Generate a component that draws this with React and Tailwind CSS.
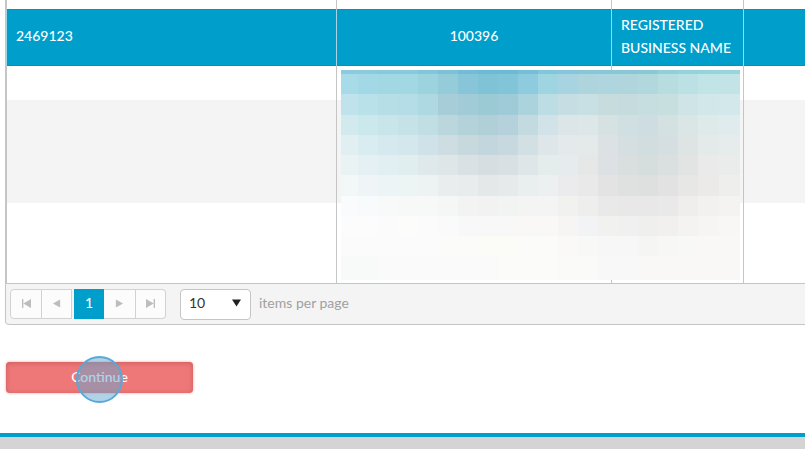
import clsx from "clsx";

// Redacted block: one colour per cell, rows from top to bottom
const MOSAIC_X = [0, 17, 37, 57, 77, 97, 117, 137, 157, 177, 197, 217, 237, 257, 277, 297, 317, 337, 357, 378, 399];
const MOSAIC_Y = [0, 4, 24, 45, 65, 85, 105, 126, 146, 166, 186, 210];
const MOSAIC = [
  "8bcbdd 8bcbdd 88cadb 88cadb 82c6d9 7bc2d6 72bdd5 6abbd5 6abbd5 75bfd6 80c8d9 86c6da 88c7d6 88c7d6 88c7d6 88c9d6 8fd0da 94d3dc 96d4dd 98d6df",
  "a6dbe7 a3d9e6 a1d8e4 a1d8e4 9dd3df 94ccda 89c5d8 80c3d6 82c4d8 8fcbde 9fd5e0 a8d3e0 aed4dd afd5de b0d5dd b1d8dc b8dde1 bce1e5 c1e4e7 c2e4e7",
  "bfe2ec b9e1e9 b5dee7 b4dde7 aed8e2 a7ced8 a0cbd7 9bcad5 9ecbd7 abd3dd bbdde3 c6dee3 c8e0e3 c6dcdd c5dbde c7dee1 c8dfe0 cfe4e6 d2e7e9 d3e8ea",
  "d2e9ee cbe8ed c8e5ea c4e2e8 c1dee5 bbd6dc b3d2da b0cfd7 b5d1dc c3dbe0 d1e3e8 dce6e8 dee7e7 d5e2e1 d0dfe2 cedde1 d3e1e1 dae6e6 deeaea dfebec",
  "e1eff3 d9ecef d5e9ee d3e7ec d0e2e9 cedde2 c7d9dc c3d5dd c7d8df d2e0e3 dee6e9 e4e9ec e4eae9 dce1e3 d5dee0 d2dde0 d5dee1 dee4e4 e4e9e9 e6ecec",
  "e9f3f4 e5f0f4 e2eff2 e1eeef dfe8eb dee6e7 dae1e4 d6dee1 d9e0e4 dfe6e8 e5ecec e6ebed e6e8e7 dde1e4 d9dfdf d6dddd dadfe0 e2e4e3 eaeaea eaecec",
  "f2f7f8 eff5f7 edf4f6 ecf4f4 edf2f3 e9edee e8ecec e5e8e9 e6eaeb e9eeee edf0f0 ebebed e9e9e9 e3e3e4 dfe1e1 dedfdf e2e2e3 e7e7e6 eceae9 eeeeec",
  "f9fbfd f8fbfb f7faf9 f7f9f8 f6f9f8 f4f7f6 f3f3f3 f2f2f2 f2f4f4 f4f4f4 f4f4f4 f1f1ef eeeeec e9e9ea e8e8e8 e8e8e8 e9e9ea efeeed f2f1ef f4f3f2",
  "fcfcfc fcfcfc fbfbfb fcfcfa fbfbfc fafafb f8f8f9 f8f8f8 f8f8f8 f9f8f7 f9f8f6 f6f5f4 f2f3f4 f1f1ef f0f0f0 efefee f1f0ee f4f3f2 f6f5f4 f8f7f5",
  "fbfbfb fbfbfb fbfbfb fbfbfb fbfbfb fbfbf9 fbfbf9 fbfbf8 fbfbf8 fbfbf9 fbfbf9 faf9f7 f8f8f6 f7f7f8 f7f7f7 f5f6f4 f7f8f6 f8f9f7 f9f8f7 f9f8f7",
  "f8f9f9 f8f9f9 fafafa fafafa fafafa fafafa fafafa fafafa fbfbf9 fbfbf9 fbfbf9 fafbf8 fafaf8 f8f8f9 f8f8f9 faf8f7 f9f8f7 f9f8f7 f9f8f7 f9f8f7",
].map((row) => row.split(" "));

function Redaction({ className }) {
  return (
    <svg width="399" height="210" shapeRendering="crispEdges" aria-hidden="true" className={className}>
      {MOSAIC.map((row, y) =>
        row.map((fill, x) => (
          <rect
            key={`${x}-${y}`}
            x={MOSAIC_X[x]}
            y={MOSAIC_Y[y]}
            width={MOSAIC_X[x + 1] - MOSAIC_X[x]}
            height={MOSAIC_Y[y + 1] - MOSAIC_Y[y]}
            fill={`#${fill}`}
          />
        ))
      )}
    </svg>
  );
}

const ROWS = [
  { cells: ["", "", "", ""], className: "h-[9px]" },
  {
    cells: ["2469123", "100396", "REGISTERED BUSINESS NAME", ""],
    className: "h-[57px] bg-[#009ecb] text-white shadow-[inset_0_1px_0_#0b8fb8,inset_0_-1px_0_#0b8fb8]",
    selected: true,
  },
  { cells: ["", "", "", ""], className: "h-[34px]" },
  { cells: ["", "", "", ""], className: "h-[103px] bg-[#f4f4f4]" },
  { cells: ["", "", "", ""], className: "h-20" },
];

function Grid() {
  return (
    <div className="relative">
      <table className="w-full table-fixed border-separate border-spacing-0">
        <colgroup>
          <col className="w-[330px]" />
          <col className="w-[275px]" />
          <col className="w-[132px]" />
          <col />
        </colgroup>
        <tbody>
          {ROWS.map((row, r) => (
            <tr key={r} className={row.className}>
              {row.cells.map((cell, c) => (
                <td
                  key={c}
                  className={clsx(
                    "border-l pt-0 pb-1 font-medium leading-[23px]",
                    row.selected ? "border-[#a5d5e3]" : "border-[#c5c5c5]",
                    c === 1 ? "px-2 text-center" : "pl-[9px]"
                  )}
                >
                  {cell}
                </td>
              ))}
            </tr>
          ))}
        </tbody>
      </table>
      <Redaction className="absolute left-[335px] top-[70px]" />
    </div>
  );
}

function PagerButton({ label, className, children }) {
  return (
    <button
      type="button"
      aria-label={label}
      className={clsx("flex h-[30px] items-center justify-center border-[#d2d2d2] bg-[#fcfcfc] pb-px text-[#bdbdbd]", className)}
    >
      <svg width="9" height="9" viewBox="0 0 10 10" fill="currentColor" aria-hidden="true">
        {children}
      </svg>
    </button>
  );
}

function Pager() {
  return (
    <div className="flex h-[42px] items-center rounded-bl border-y border-[#c5c5c5] bg-[#f4f4f4] pl-1">
      <PagerButton label="First page" className="w-8 rounded-l border">
        <path d="M0 0h1.500v10H0zM10 0v10L1.500 5z" />
      </PagerButton>
      <PagerButton label="Previous page" className="w-[30px] border-y border-r">
        <path d="M9 0.500v9L1 5z" />
      </PagerButton>
      <button
        type="button"
        aria-current="page"
        className="ml-0.5 h-[30px] w-[30px] bg-[#009ecb] pb-0.5 font-medium text-white"
      >
        1
      </button>
      <PagerButton label="Next page" className="w-8 border-y border-r">
        <path d="M1 0.500v9l8-4.500z" />
      </PagerButton>
      <PagerButton label="Last page" className="w-[30px] rounded-r border-y border-r">
        <path d="M0 0v10l8.500-5zM8.500 0h1.500v10H8.500z" />
      </PagerButton>

      <div className="relative ml-[14px]">
        <select
          id="page-size"
          defaultValue="10"
          className="block h-[31px] w-[71px] appearance-none rounded border border-[#c5c5c5] bg-white pb-0.5 pl-2 text-[#333]"
        >
          <option>5</option>
          <option>10</option>
          <option>20</option>
        </select>
        <svg
          width="9"
          height="8"
          viewBox="0 0 9 8"
          aria-hidden="true"
          className="pointer-events-none absolute right-[10px] top-[10px] fill-[#222]"
        >
          <path d="M0 0.500h9L4.500 7.500z" />
        </svg>
      </div>
      <label htmlFor="page-size" className="ml-2 pb-0.5 text-[#a0a0a0]">
        items per page
      </label>
    </div>
  );
}

export default function App() {
  return (
    <div className="flex min-h-screen flex-col overflow-x-hidden bg-white font-['Lato','Liberation_Sans',sans-serif] text-sm">
      <main className="pl-[5px]">
        <section className="rounded-bl border-l border-[#c5c5c5]">
          <Grid />
          <Pager />
        </section>

        <div className="relative mt-[37px] w-[188px] pl-px">
          <button
            type="button"
            className="block h-[31px] w-full rounded bg-[#ee7777] pb-0.5 font-medium text-white shadow-[inset_0_1px_5px_#c95f5f,0_0_3px_#f5a0a0]"
          >
            Continue
          </button>
          {/* Click marker */}
          <span className="pointer-events-none absolute left-[71px] -top-1.5 size-[47px] rounded-full border-2 border-[#57aad8] bg-[#5fa8d4]/50" />
        </div>
      </main>

      <footer className="mt-10 min-h-4 flex-1 border-t-4 border-[#009ecb] bg-[#d4d4d4]" />
    </div>
  );
}
